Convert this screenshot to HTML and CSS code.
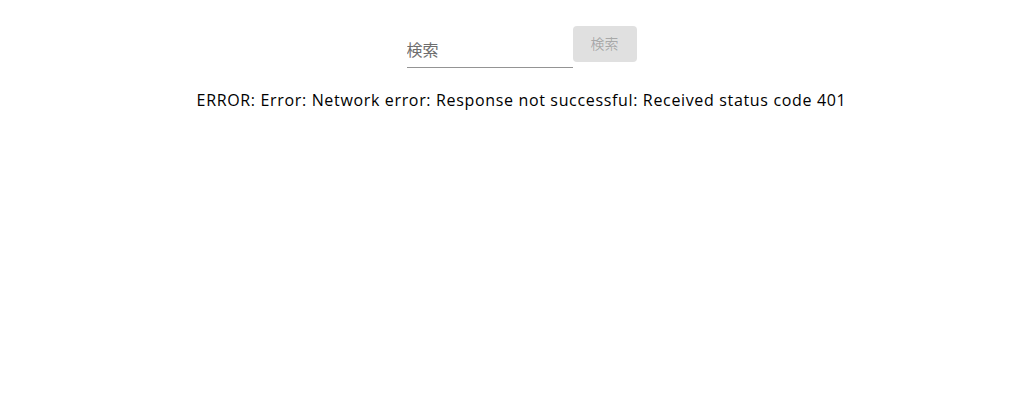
FILE: index.html
```html
<!DOCTYPE html>
<html lang="ja">
<head>
<meta charset="utf-8">
<link rel="stylesheet" href="styles.css">
</head>
<body>
<div class="page">
  <form class="search">
    <div class="field">
      <input class="field-input" type="text" placeholder="検索">
    </div>
    <button class="btn" type="button" disabled>検索</button>
  </form>
  <p class="error">ERROR: Error: Network error: Response not successful: Received status code 401</p>
</div>
</body>
</html>
```
FILE: styles.css
```css
html, body {
  margin: 0;
  padding: 0;
  background: #fff;
}
body {
  font-family: "Noto Sans CJK JP", "Noto Sans", sans-serif;
  color: #000;
}
.page {
  padding-left: 20px;
  padding-top: 26px;
  display: flex;
  flex-direction: column;
  align-items: center;
}
.search {
  display: flex;
  align-items: flex-start;
  margin: 0;
}
.field {
  width: 166px;
  margin-top: 10px;
  border-bottom: 1px solid rgba(0, 0, 0, 0.42);
}
.field-input {
  display: block;
  width: 100%;
  box-sizing: border-box;
  border: 0;
  outline: 0;
  padding: 4px 0 9px;
  height: 31px;
  font: inherit;
  font-size: 16px;
  background: transparent;
  color: rgba(0, 0, 0, 0.87);
}
.field-input::placeholder {
  color: #6e6e6e;
  opacity: 1;
}
.btn {
  width: 64px;
  height: 36px;
  border: 0;
  border-radius: 4px;
  background: #e0e0e0;
  color: rgba(0, 0, 0, 0.26);
  font: inherit;
  font-size: 14px;
  padding: 0 0 3px;
}
.error {
  margin: 20px 0 0;
  font-family: "Open Sans", "Noto Sans", sans-serif;
  font-size: 16px;
  line-height: 24px;
  letter-spacing: 0.66px;
  white-space: nowrap;
}
```
